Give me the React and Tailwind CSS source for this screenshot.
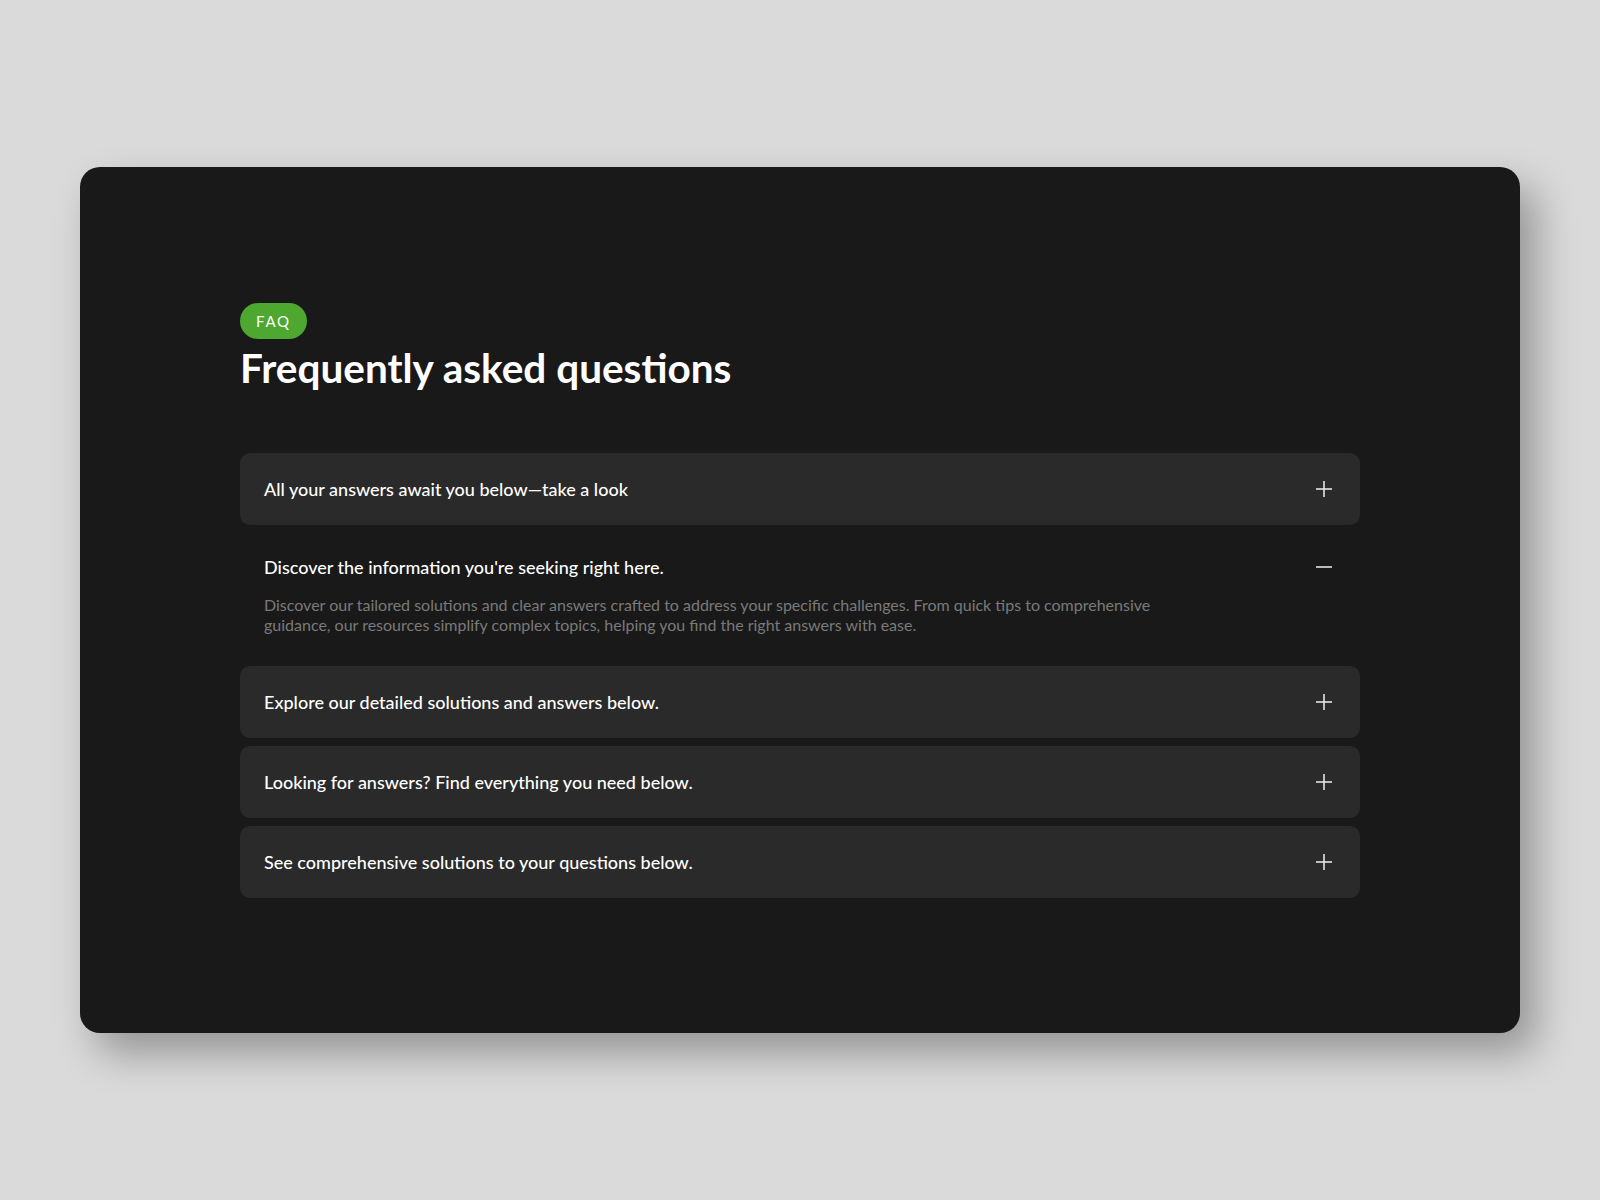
import React, { useState } from "react"

const faqs = [
  {
    q: "All your answers await you below—take a look",
    a: "Discover our tailored solutions and clear answers crafted to address your specific challenges. From quick tips to comprehensive guidance, our resources simplify complex topics, helping you find the right answers with ease.",
  },
  {
    q: "Discover the information you're seeking right here.",
    a: "Discover our tailored solutions and clear answers crafted to address your specific challenges. From quick tips to comprehensive guidance, our resources simplify complex topics, helping you find the right answers with ease.",
  },
  {
    q: "Explore our detailed solutions and answers below.",
    a: "Discover our tailored solutions and clear answers crafted to address your specific challenges. From quick tips to comprehensive guidance, our resources simplify complex topics, helping you find the right answers with ease.",
  },
  {
    q: "Looking for answers? Find everything you need below.",
    a: "Discover our tailored solutions and clear answers crafted to address your specific challenges. From quick tips to comprehensive guidance, our resources simplify complex topics, helping you find the right answers with ease.",
  },
  {
    q: "See comprehensive solutions to your questions below.",
    a: "Discover our tailored solutions and clear answers crafted to address your specific challenges. From quick tips to comprehensive guidance, our resources simplify complex topics, helping you find the right answers with ease.",
  },
]

function ToggleIcon({ open }) {
  return (
    <svg width="24" height="24" viewBox="0 0 24 24" fill="none" stroke="#e4e4e4" strokeWidth="1.6">
      <path d="M4 12h16" />
      {!open && <path d="M12 4v16" />}
    </svg>
  )
}

function FaqItem({ item, open, onToggle }) {
  return (
    <div className={`rounded-[10px] ${open ? "bg-transparent" : "bg-[#2a2a2a]"}`}>
      <button
        onClick={onToggle}
        className={`flex w-full items-center justify-between px-6 text-left ${open ? "pt-[22px] pb-0" : "h-[72px]"}`}
      >
        <span className="text-[18px] leading-6 font-medium text-white">{item.q}</span>
        <ToggleIcon open={open} />
      </button>
      {open && (
        <p className="mt-4 max-w-[950px] px-6 pb-[23px] text-[16px] leading-5 text-[#7a7a7a]">
          {item.a}
        </p>
      )}
    </div>
  )
}

export default function App() {
  const [openIdx, setOpenIdx] = useState(1)

  return (
    <div
      className="flex min-h-screen w-full items-center justify-center bg-[#dadada]"
      style={{ fontFamily: "Lato, 'Noto Sans', sans-serif" }}
    >
      <div className="h-[866px] w-[1440px] rounded-[20px] bg-[#191919] px-40 pt-[136px] shadow-[16px_20px_40px_rgba(0,0,0,0.32)]">
        {/* HEADER */}
        <span className="inline-flex h-9 items-center rounded-full bg-[#4ea72e] px-4 text-[15px] font-normal tracking-[0.12em] text-white">
          FAQ
        </span>
        <h1 className="mt-[3px] text-[40.5px] leading-[52px] font-bold text-white">
          Frequently asked questions
        </h1>

        {/* LIST */}
        <div className="mt-[59px] flex flex-col gap-2">
          {faqs.map((item, i) => (
            <FaqItem
              key={i}
              item={item}
              open={openIdx === i}
              onToggle={() => setOpenIdx(openIdx === i ? -1 : i)}
            />
          ))}
        </div>
      </div>
    </div>
  )
}
